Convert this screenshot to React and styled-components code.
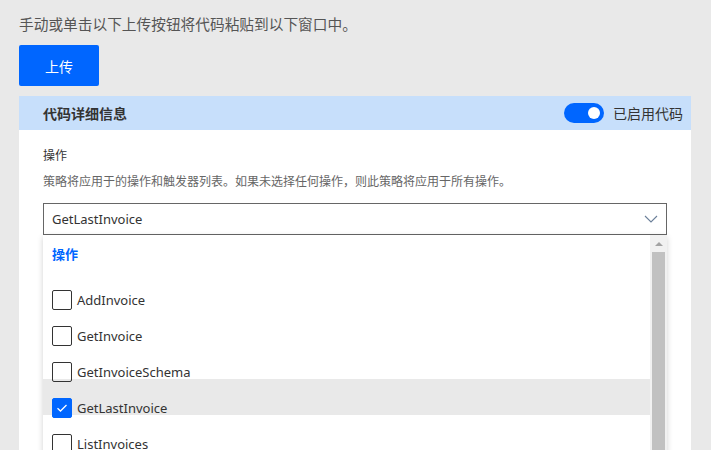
import React from 'react'
import styled, { createGlobalStyle } from 'styled-components';

const GlobalStyle = createGlobalStyle`
  html, body {
    margin: 0;
    padding: 0;
    height: 100%;
    overflow: hidden;
    background-color: #e9e9e9;
    font-family: "Noto Sans", "Noto Sans CJK SC", sans-serif;
  }
`

const operations = [
  { name: 'AddInvoice', checked: false },
  { name: 'GetInvoice', checked: false },
  { name: 'GetInvoiceSchema', checked: false },
  { name: 'GetLastInvoice', checked: true },
  { name: 'ListInvoices', checked: false },
  { name: 'UpdateInvoice', checked: false },
];

const App = () => {
  return (
    <Page>
      <GlobalStyle />
      <Intro>手动或单击以下上传按钮将代码粘贴到以下窗口中。</Intro>
      <UploadButton>上传</UploadButton>

      <Panel>
        <PanelHeader>
          <PanelTitle>代码详细信息</PanelTitle>
          <ToggleWrap>
            <Toggle $on />
            <ToggleLabel>已启用代码</ToggleLabel>
          </ToggleWrap>
        </PanelHeader>

        <PanelBody>
          <FieldLabel>操作</FieldLabel>
          <FieldHint>策略将应用于的操作和触发器列表。如果未选择任何操作，则此策略将应用于所有操作。</FieldHint>

          <Select>
            <span>GetLastInvoice</span>
            <svg width="14" height="8" viewBox="0 0 14 8">
              <path d="M1 1 L7 7 L13 1" fill="none" stroke="#6b7f99" strokeWidth="1.1" />
            </svg>
          </Select>

          <Menu>
            <MenuItems>
              <MenuHeader>操作</MenuHeader>
              {operations.map((op) => (
                <Option key={op.name} $active={op.checked}>
                  <CheckBox $checked={op.checked}>
                    {op.checked && (
                      <svg width="12" height="10" viewBox="0 0 12 10">
                        <path d="M1.5 5.2 L4.5 8 L10.5 2" fill="none" stroke="#fff" strokeWidth="1.3" />
                      </svg>
                    )}
                  </CheckBox>
                  <OptionText>{op.name}</OptionText>
                </Option>
              ))}
            </MenuItems>
            <ScrollTrack>
              <ScrollArrow />
              <ScrollThumb />
            </ScrollTrack>
          </Menu>
        </PanelBody>
      </Panel>
    </Page>
  );
};

export default App;

const Page = styled.div`
  padding: 13px 20px 0 19px;
  display: flex;
  flex-direction: column;
  align-items: flex-start;
`
const Intro = styled.p`
  margin: 0;
  font-size: 14.7px;
  line-height: 22px;
  color: #555;
`
const UploadButton = styled.button`
  margin-top: 10px;
  width: 80px;
  height: 41px;
  border: none;
  border-radius: 2px;
  background-color: #0066ff;
  color: #fff;
  font-family: inherit;
  font-size: 14px;
  padding: 0;
`
const Panel = styled.div`
  margin-top: 10px;
  align-self: stretch;
  background-color: #fff;
  min-height: 400px;
`
const PanelHeader = styled.div`
  height: 34px;
  padding: 0 8px 0 24px;
  display: flex;
  align-items: center;
  justify-content: space-between;
  background-color: #c7dffb;
`
const PanelTitle = styled.div`
  font-size: 14px;
  font-weight: 700;
  color: #333;
`
const ToggleWrap = styled.div`
  display: flex;
  align-items: center;
  gap: 9px;
`
const Toggle = styled.div`
  position: relative;
  width: 40px;
  height: 20px;
  border-radius: 10px;
  background-color: ${(p) => (p.$on ? '#0066ff' : '#ccc')};

  &::after{
    content: '';
    position: absolute;
    top: 4px;
    right: ${(p) => (p.$on ? '4px' : '24px')};
    width: 12px;
    height: 12px;
    border-radius: 50%;
    background-color: #fff;
  }
`
const ToggleLabel = styled.span`
  font-size: 14px;
  color: #333;
`
const PanelBody = styled.div`
  padding: 17px 24px 0 24px;
`
const FieldLabel = styled.div`
  font-size: 12px;
  line-height: 18px;
  color: #333;
`
const FieldHint = styled.div`
  margin-top: 8px;
  font-size: 12px;
  line-height: 18px;
  color: #666;
`
const Select = styled.div`
  margin-top: 12px;
  height: 30px;
  border: 1px solid #666;
  padding: 0 8px;
  display: flex;
  align-items: center;
  justify-content: space-between;
  font-size: 13px;
  color: #333;
`
const Menu = styled.div`
  display: flex;
  background-color: #fff;
  box-shadow: 0 2px 6px rgba(0, 0, 0, 0.18);
  height: 260px;
`
const MenuItems = styled.div`
  flex: 1;
  display: flex;
  flex-direction: column;
`
const MenuHeader = styled.div`
  height: 36px;
  padding-left: 9px;
  display: flex;
  align-items: center;
  font-size: 13px;
  font-weight: 700;
  color: #0066ff;
`
const Option = styled.div`
  height: 36px;
  flex-shrink: 0;
  box-sizing: border-box;
  padding: 19px 0 0 9px;
  display: flex;
  align-items: flex-start;
  gap: 5px;
  background-color: ${(p) => (p.$active ? '#e9e9e9' : 'transparent')};
`
const CheckBox = styled.div`
  position: relative;
  z-index: 1;
  box-sizing: border-box;
  width: 20px;
  height: 20px;
  flex-shrink: 0;
  border: 1px solid ${(p) => (p.$checked ? '#0066ff' : '#333')};
  border-radius: 2px;
  background-color: ${(p) => (p.$checked ? '#0066ff' : 'transparent')};
  display: flex;
  align-items: center;
  justify-content: center;
`
const OptionText = styled.span`
  font-size: 13px;
  line-height: 20px;
  color: #333;
`
const ScrollTrack = styled.div`
  width: 17px;
  background-color: #f1f1f1;
  display: flex;
  flex-direction: column;
  align-items: center;
  padding-top: 7px;
`
const ScrollArrow = styled.div`
  width: 0;
  height: 0;
  border-left: 4px solid transparent;
  border-right: 4px solid transparent;
  border-bottom: 4px solid #a3a3a3;
`
const ScrollThumb = styled.div`
  margin-top: 6px;
  width: 13px;
  flex: 1;
  background-color: #c1c1c1;
`
